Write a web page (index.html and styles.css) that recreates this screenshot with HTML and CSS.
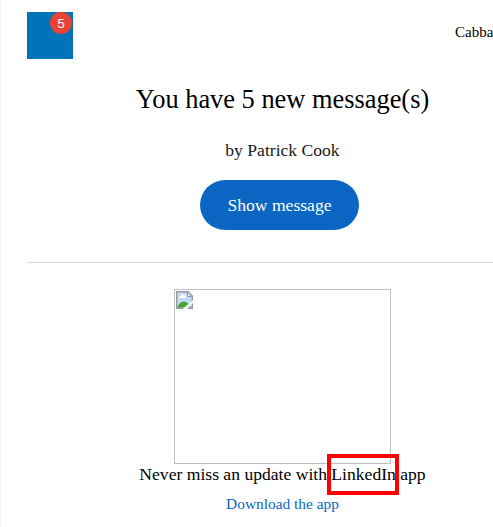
FILE: index.html
```html
<!DOCTYPE html>
<html lang="en">
<head>
<meta charset="utf-8">
<title>New messages</title>
<link rel="stylesheet" href="styles.css">
</head>
<body>
<main class="mail">
  <header class="header">
    <div class="logo"><span class="badge">5</span></div>
    <span class="recipient">Cabba</span>
  </header>
  <section class="summary">
    <h1 class="title">You have 5 new message(s)</h1>
    <p class="sender">by Patrick Cook</p>
    <a class="button">Show message</a>
  </section>
  <section class="promo">
    <div class="image">
      <svg class="broken" width="18" height="19" viewBox="0 0 18 19">
        <path d="M.7.7H12L16.3 5V17.3H.7Z" fill="#c5d8f5"/>
        <path d="M3 7Q3 5 5 5Q6 2 8 4Q10 4 10 7Z" fill="#fff"/>
        <path d="M1.5 16.5Q3 11 8 10.5Q12 11 15 16.5Z" fill="#43a52c"/>
        <path d="M.7 17.3V.7H12L16.3 5V17.3Z" fill="none" stroke="#999" stroke-width="1.4"/>
        <path d="M11.5 1V5.5H16Z" fill="#eee" stroke="#999"/>
        <path d="M6 18.5L18 8.5V11L10.5 18.5Z" fill="#fff"/>
      </svg>
    </div>
    <p class="caption">Never miss an update with <span class="marked">LinkedIn</span> app</p>
    <a class="download">Download the app</a>
  </section>
</main>
</body>
</html>
```

FILE: styles.css
```css
*, *::after { box-sizing: border-box; }
body {
  margin: 0;
  height: 527px;
  background: #fff;
  color: #000;
  font-family: "Liberation Serif", serif;
}
.mail {
  height: 527px;
  padding: 12px 0 0 26px;
  border-left: 1px solid #f3f2ef;
}
.header {
  display: flex;
  height: 47px;
}
.logo {
  width: 46px;
  height: 47px;
  padding-left: 23px;
  background: #0073b9;
}
.badge {
  display: block;
  width: 22px;
  height: 22px;
  border-radius: 50%;
  background: #ea4335;
  color: #fff;
  font: 13px/23px "Liberation Sans", sans-serif;
  text-align: center;
}
.recipient {
  width: 38px;
  overflow: hidden;
  margin-left: 382px;
  font-size: 15px;
  line-height: 40px;
}
.summary {
  display: flex;
  flex-direction: column;
  align-items: center;
  height: 204px;
  padding: 24px 0 0 45px;
  border-bottom: 1px solid #d9d9d9;
}
.title {
  margin: 0;
  font-size: 26.4px;
  font-weight: 400;
  line-height: 32px;
}
.sender {
  margin: 25px 0 0;
  color: #1a1a1a;
  font-size: 17.6px;
  line-height: 20px;
}
.button {
  width: 159px;
  height: 50px;
  margin: 20px 6px 0 0;
  border-radius: 25px;
  background: #0a66c2;
  color: #fff;
  font-size: 17.6px;
  line-height: 51px;
  text-align: center;
}
.promo {
  display: flex;
  flex-direction: column;
  align-items: center;
  padding: 26px 0 0 45px;
}
.image {
  width: 217px;
  height: 175px;
  padding: 1px;
  border: 1px solid #c0c0c0;
}
.broken { display: block; }
.caption {
  margin: 0;
  font-size: 17.6px;
  line-height: 21px;
}
.marked { position: relative; }
.marked::after {
  content: "";
  position: absolute;
  left: -4px;
  top: -10px;
  width: 72px;
  height: 41px;
  border: 4px solid #f00;
}
.download {
  margin-top: 9px;
  color: #0a66c2;
  font-size: 15.4px;
  line-height: 20px;
}
```
